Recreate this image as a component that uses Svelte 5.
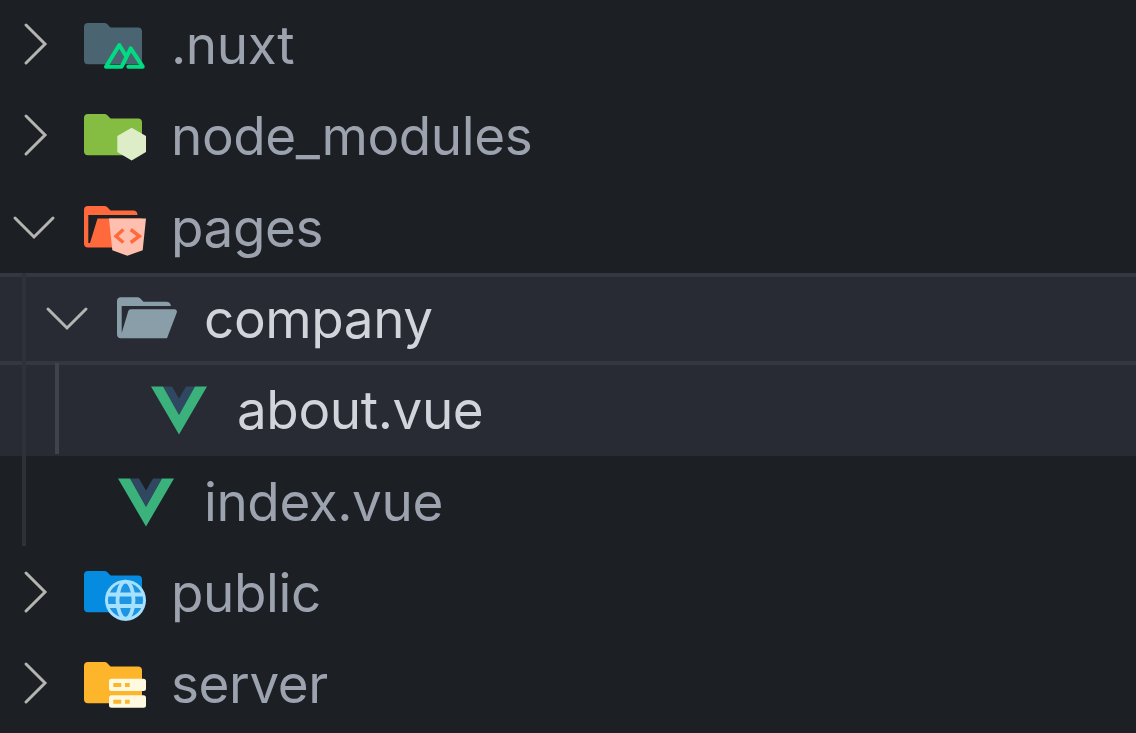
<script>
  const rows = [
    { name: '.nuxt', depth: 0, chevron: 'right', icon: 'nuxt' },
    { name: 'node_modules', depth: 0, chevron: 'right', icon: 'node' },
    { name: 'pages', depth: 0, chevron: 'down', icon: 'pages' },
    { name: 'company', depth: 1, chevron: 'down', icon: 'open', active: 'head' },
    { name: 'about.vue', depth: 2, icon: 'vue', active: 'item' },
    { name: 'index.vue', depth: 1, icon: 'vue' },
    { name: 'public', depth: 0, chevron: 'right', icon: 'public' },
    { name: 'server', depth: 0, chevron: 'right', icon: 'server' },
  ];

  const folder =
    'M6 11H22.5a4 4 0 0 1 2.6 1l3.4 3.5H56a4 4 0 0 1 4 4V48.300a4 4 0 0 1-4 4H6a4 4 0 0 1-4-4V15a4 4 0 0 1 4-4z';
</script>

<main class="tree">
  <div class="guide outer"></div>
  <div class="guide inner"></div>
  {#each rows as row}
    <div class="row {row.active ?? ''}" style="padding-left: {row.depth * 33}px">
      <span class="chevron">
        {#if row.chevron === 'right'}
          <svg width="44" height="44" viewBox="0 0 44 44"><path d="M14 3 33 22 14 41" /></svg>
        {:else if row.chevron === 'down'}
          <svg width="44" height="44" viewBox="0 0 44 44"><path d="M3 13 22 32 41 13" /></svg>
        {/if}
      </span>
      <svg class="icon" width="66" height="66" viewBox="0 0 66 66">
        {#if row.icon === 'nuxt'}
          <path d={folder} fill="#4b6472" />
          <path
            d="M46.300 54.700H60.700L48.700 36.300 39.700 54.700H24L37.300 33 44 44"
            fill="none"
            stroke="#00dc82"
            stroke-width="4"
            stroke-linejoin="round"
            stroke-linecap="round"
          />
        {:else if row.icon === 'node'}
          <path d={folder} fill="#85bd42" />
          <path d="M49.700 24.700 64 33V49L49.700 57.400 35.300 49V33z" fill="#dcedc8" />
        {:else if row.icon === 'pages'}
          <path
            d="M6 11H22.500a4 4 0 0 1 2.600 1l3.400 3.500H52a4 4 0 0 1 3.500 4.500H6.300V48H8L15.500 23.500H60L52 52.500H6a4 4 0 0 1-4-4V15a4 4 0 0 1 4-4z"
            fill="#ff693b"
          />
          <path d="M27 23.500H64L60.700 55.200 45.300 60.800 30.300 55.200z" fill="#ffbfae" />
          <path
            d="M41.300 34.500 34 41.200 41.300 47.500M48.700 34.500 57.300 41.200 48.700 47.500"
            fill="none"
            stroke="#ff693b"
            stroke-width="3.500"
          />
        {:else if row.icon === 'open'}
          <path
            d="M6 11.300H22.500a4 4 0 0 1 2.600 1l3.400 3.400H51a5 5 0 0 1 5 4.300H6.700V47L13.300 25a2.500 2.500 0 0 1 2.400-1.700H59.500a2.500 2.500 0 0 1 2.300 3.300L52 52.300H6a4 4 0 0 1-4-4V15.300a4 4 0 0 1 4-4z"
            fill="#8a9ea9"
          />
        {:else if row.icon === 'vue'}
          <path d="M15 9.500H24L31 21.500 38 9.500H47L31 38z" fill="#2f4760" />
          <path d="M3 9.500H15L31 38 47 9.500H59L31 57.500z" fill="#3bb27c" />
        {:else if row.icon === 'public'}
          <path d={folder} fill="#058ce0" />
          <circle cx="43.500" cy="40.200" r="20.500" fill="#a6e1ff" />
          <circle cx="43.500" cy="40.200" r="17.500" fill="#1d95e2" />
          <g fill="none" stroke="#a6e1ff" stroke-width="3.800">
            <ellipse cx="43.500" cy="40.200" rx="8" ry="18.500" />
            <path d="M25 34.500H62M25 46H62" />
          </g>
        {:else if row.icon === 'server'}
          <path d={folder} fill="#fdb52b" />
          <rect x="27" y="27.700" width="37" height="12.300" rx="2.500" fill="#fff9e0" />
          <rect x="27" y="44.300" width="37" height="12.400" rx="2.500" fill="#fff9e0" />
          <path
            d="M31.300 32H39.300V36H31.300zM43 32H47.700V36H43zM31.300 48.700H39.300V52.700H31.300zM43 48.700H47.700V52.700H43z"
            fill="#fdb52b"
          />
        {/if}
      </svg>
      <span class="name">{row.name}</span>
    </div>
  {/each}
</main>

<style>
  :global(body) {
    background: #1c1f24;
    overflow: hidden;
  }

  .tree {
    position: relative;
    margin-top: -0.6px;
    font-family: Inter, 'Liberation Sans', sans-serif;
  }

  .row {
    display: flex;
    align-items: center;
    height: 91.3px;
    box-sizing: border-box;
    color: #9ca3af;
    font-size: 53px;
    font-weight: 420;
    letter-spacing: -0.4px;
  }

  .row.head {
    background: #282b33;
    border-top: 4px solid #343741;
    border-bottom: 4px solid #343741;
    color: #d1d5db;
  }

  .row.item {
    background: #282b33;
    color: #d1d5db;
  }

  .chevron {
    display: flex;
    flex: none;
    width: 44px;
    height: 44px;
    margin: -2px 26px 0 12px;
  }

  .chevron path {
    fill: none;
    stroke: #b4b4b0;
    stroke-width: 3;
    stroke-linecap: round;
  }

  .icon {
    flex: none;
    margin-right: 23px;
  }

  .name {
    white-space: nowrap;
  }

  .guide {
    position: absolute;
    width: 4px;
    z-index: 1;
  }

  .outer {
    left: 22px;
    top: 273.6px;
    height: 273px;
    background: #2e3138;
  }

  .inner {
    left: 55px;
    top: 364px;
    height: 91px;
    background: #40434c;
  }
</style>
